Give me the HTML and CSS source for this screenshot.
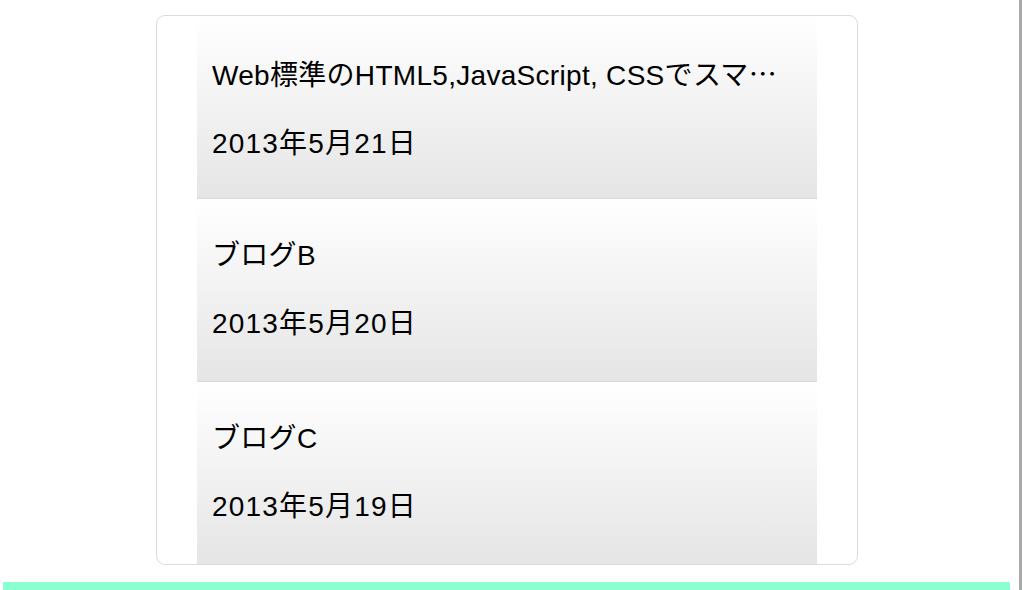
FILE: index.html
```html
<!DOCTYPE html>
<html lang="ja">
<head>
<meta charset="utf-8">
<title>ブログ</title>
<link rel="stylesheet" href="styles.css">
</head>
<body>
<div class="page">
  <main class="main">
    <div class="panel">
      <ul class="list">
        <li class="item">
          <h3 class="title">Web標準のHTML5,JavaScript, CSSでスマ<span class="more">…</span></h3>
          <p class="date">2013年5月21日</p>
        </li>
        <li class="item">
          <h3 class="title">ブログB</h3>
          <p class="date">2013年5月20日</p>
        </li>
        <li class="item">
          <h3 class="title">ブログC</h3>
          <p class="date">2013年5月19日</p>
        </li>
      </ul>
    </div>
    <div class="footer-bar"></div>
  </main>
  <div class="edge"></div>
</div>
</body>
</html>
```
FILE: styles.css
```css
html, body {
  margin: 0;
  padding: 0;
  background: #fff;
}
body {
  font-family: "Liberation Sans", "Noto Sans CJK JP", sans-serif;
  color: #000;
}
.page {
  display: flex;
  height: 590px;
  overflow: hidden;
}
.main {
  width: 1019px;
  padding-top: 15px;
  box-sizing: border-box;
}
.panel {
  width: 702px;
  margin-left: 156px;
  box-sizing: border-box;
  border: 1px solid #dcdcdc;
  border-radius: 9px;
  padding: 0 40px;
  overflow: hidden;
}
.list {
  list-style: none;
  margin: 0;
  padding: 0;
}
.item {
  height: 183px;
  box-sizing: border-box;
  padding: 40px 15px 0 15px;
  border-bottom: 1px solid #d9d9d9;
  background: linear-gradient(to bottom, #ffffff, #e5e5e5);
}
.item:last-child {
  border-bottom: none;
  height: 182px;
}
.title {
  margin: 0 0 34px;
  font-size: 28px;
  font-weight: normal;
  line-height: 34px;
  letter-spacing: 0.3px;
  white-space: nowrap;
}
.more {
  font-family: "Noto Sans CJK JP", sans-serif;
}
.date {
  margin: 0;
  font-size: 28px;
  line-height: 34px;
  letter-spacing: 1.2px;
}
.footer-bar {
  margin: 17px 9px 0 3px;
  height: 8px;
  background: #8affd0;
}
.edge {
  width: 3px;
  flex: none;
  background: #a9a9a9;
}
```
